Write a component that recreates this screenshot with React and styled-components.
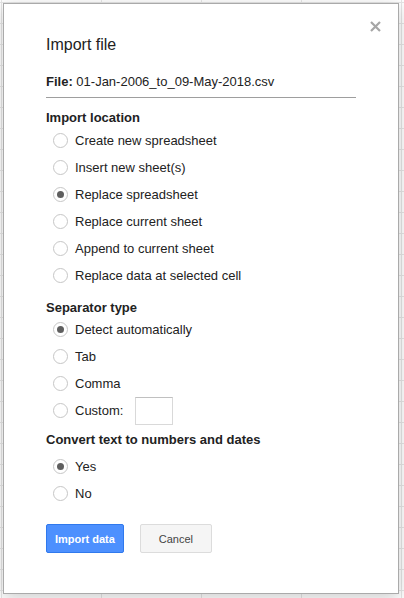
import React, { useState } from "react";
import styled, { createGlobalStyle } from "styled-components";

const GlobalStyle = createGlobalStyle`
    html, body {
        margin: 0;
        padding: 0;
        background: #fff;
    }
    body {
        font-family: Arial, "Liberation Sans", sans-serif;
        color: #222;
    }
`;

const LOCATIONS = [
    "Create new spreadsheet",
    "Insert new sheet(s)",
    "Replace spreadsheet",
    "Replace current sheet",
    "Append to current sheet",
    "Replace data at selected cell",
];

const SEPARATORS = ["Detect automatically", "Tab", "Comma"];

function Radio({ label, checked, onSelect, children }) {
    return (
        <RadioRow onClick={onSelect}>
            <Circle $checked={checked} />
            <span>{label}</span>
            {children}
        </RadioRow>
    );
}

export default function App() {
    const [location, setLocation] = useState(2);
    const [separator, setSeparator] = useState(0);
    const [convert, setConvert] = useState(true);

    return (
        <Page>
            <GlobalStyle />
            <Dialog>
                <CloseButton aria-label="Close">
                    <svg width="11" height="11" viewBox="0 0 11 11">
                        <path
                            d="M1 1 L10 10 M10 1 L1 10"
                            stroke="#a6a6a6"
                            strokeWidth="2.2"
                        />
                    </svg>
                </CloseButton>
                <Title>Import file</Title>
                <FileRow>
                    <b>File:</b> 01-Jan-2006_to_09-May-2018.csv
                </FileRow>

                <Heading $top={12}>Import location</Heading>
                <Options $top={1}>
                    {LOCATIONS.map((item, i) => (
                        <Radio
                            key={item}
                            label={item}
                            checked={location === i}
                            onSelect={() => setLocation(i)}
                        />
                    ))}
                </Options>

                <Heading $top={11}>Separator type</Heading>
                <Options>
                    {SEPARATORS.map((item, i) => (
                        <Radio
                            key={item}
                            label={item}
                            checked={separator === i}
                            onSelect={() => setSeparator(i)}
                        />
                    ))}
                    <Radio
                        label="Custom:"
                        checked={separator === 3}
                        onSelect={() => setSeparator(3)}
                    >
                        <CustomInput />
                    </Radio>
                </Options>

                <Heading $top={8}>Convert text to numbers and dates</Heading>
                <Options $top={5}>
                    <Radio
                        label="Yes"
                        checked={convert}
                        onSelect={() => setConvert(true)}
                    />
                    <Radio
                        label="No"
                        checked={!convert}
                        onSelect={() => setConvert(false)}
                    />
                </Options>

                <Buttons>
                    <Button $primary>Import data</Button>
                    <Button>Cancel</Button>
                </Buttons>
            </Dialog>
        </Page>
    );
}

const Page = styled.div`
    width: 404px;
    height: 598px;
    padding: 3px;
    box-sizing: border-box;
    background-color: #fff;
    background-image: linear-gradient(to right, #e6e6e6 1px, transparent 1px),
        linear-gradient(to bottom, #e6e6e6 1px, transparent 1px);
    background-size: 100px 21px;
    background-position: 1px 2px;
`;

const Dialog = styled.div`
    position: relative;
    width: 396px;
    height: 591px;
    box-sizing: border-box;
    padding: 31px 42px 0 42px;
    background: #fff;
    border: 1px solid rgba(0, 0, 0, 0.333);
    box-shadow: 0 4px 16px rgba(0, 0, 0, 0.2);
    font-size: 13px;
`;

const CloseButton = styled.button`
    position: absolute;
    top: 14px;
    right: 15px;
    width: 16px;
    height: 16px;
    padding: 0;
    display: flex;
    align-items: center;
    justify-content: center;
    border: none;
    background: none;
    cursor: pointer;
`;

const Title = styled.div`
    font-size: 16px;
    line-height: 20px;
    color: #222;
`;

const FileRow = styled.div`
    width: 310px;
    margin-top: 19px;
    padding-bottom: 7px;
    line-height: 16px;
    border-bottom: 1px solid #9e9e9e;
    color: #222;

    & b {
        font-weight: bold;
    }
`;

const Heading = styled.div`
    margin-top: ${(p) => p.$top}px;
    font-weight: bold;
    line-height: 16px;
`;

const Options = styled.div`
    display: flex;
    flex-direction: column;
    margin-top: ${(p) => p.$top || 0}px;
    padding-left: 7px;
`;

const RadioRow = styled.label`
    display: flex;
    align-items: center;
    gap: 7px;
    height: 27px;
    cursor: pointer;
    color: #222;
`;

const Circle = styled.span`
    position: relative;
    width: 15px;
    height: 15px;
    box-sizing: border-box;
    border-radius: 50%;
    border: 1px solid #c6c6c6;
    background: #fff;
    flex-shrink: 0;

    &::after {
        content: "";
        display: ${(p) => (p.$checked ? "block" : "none")};
        position: absolute;
        left: 3px;
        top: 3px;
        width: 7px;
        height: 7px;
        border-radius: 50%;
        background: #5f5f5f;
    }
`;

const CustomInput = styled.span`
    width: 38px;
    height: 28px;
    margin-left: 5px;
    box-sizing: border-box;
    border: 1px solid #d9d9d9;
    border-top-color: #c0c0c0;
    background: #fff;
`;

const Buttons = styled.div`
    display: flex;
    gap: 16px;
    margin-top: 17px;
`;

const Button = styled.button`
    height: 29px;
    padding: 0 ${(p) => (p.$primary ? "8px" : "15px")};
    min-width: 72px;
    border-radius: 2px;
    font-family: Arial, "Liberation Sans", sans-serif;
    font-size: 11px;
    cursor: pointer;
    color: ${(p) => (p.$primary ? "#fff" : "#444")};
    background: ${(p) => (p.$primary ? "#4d90fe" : "#f5f5f5")};
    border: 1px solid ${(p) => (p.$primary ? "#3079ed" : "#dcdcdc")};
    font-weight: ${(p) => (p.$primary ? "bold" : "normal")};
`;
